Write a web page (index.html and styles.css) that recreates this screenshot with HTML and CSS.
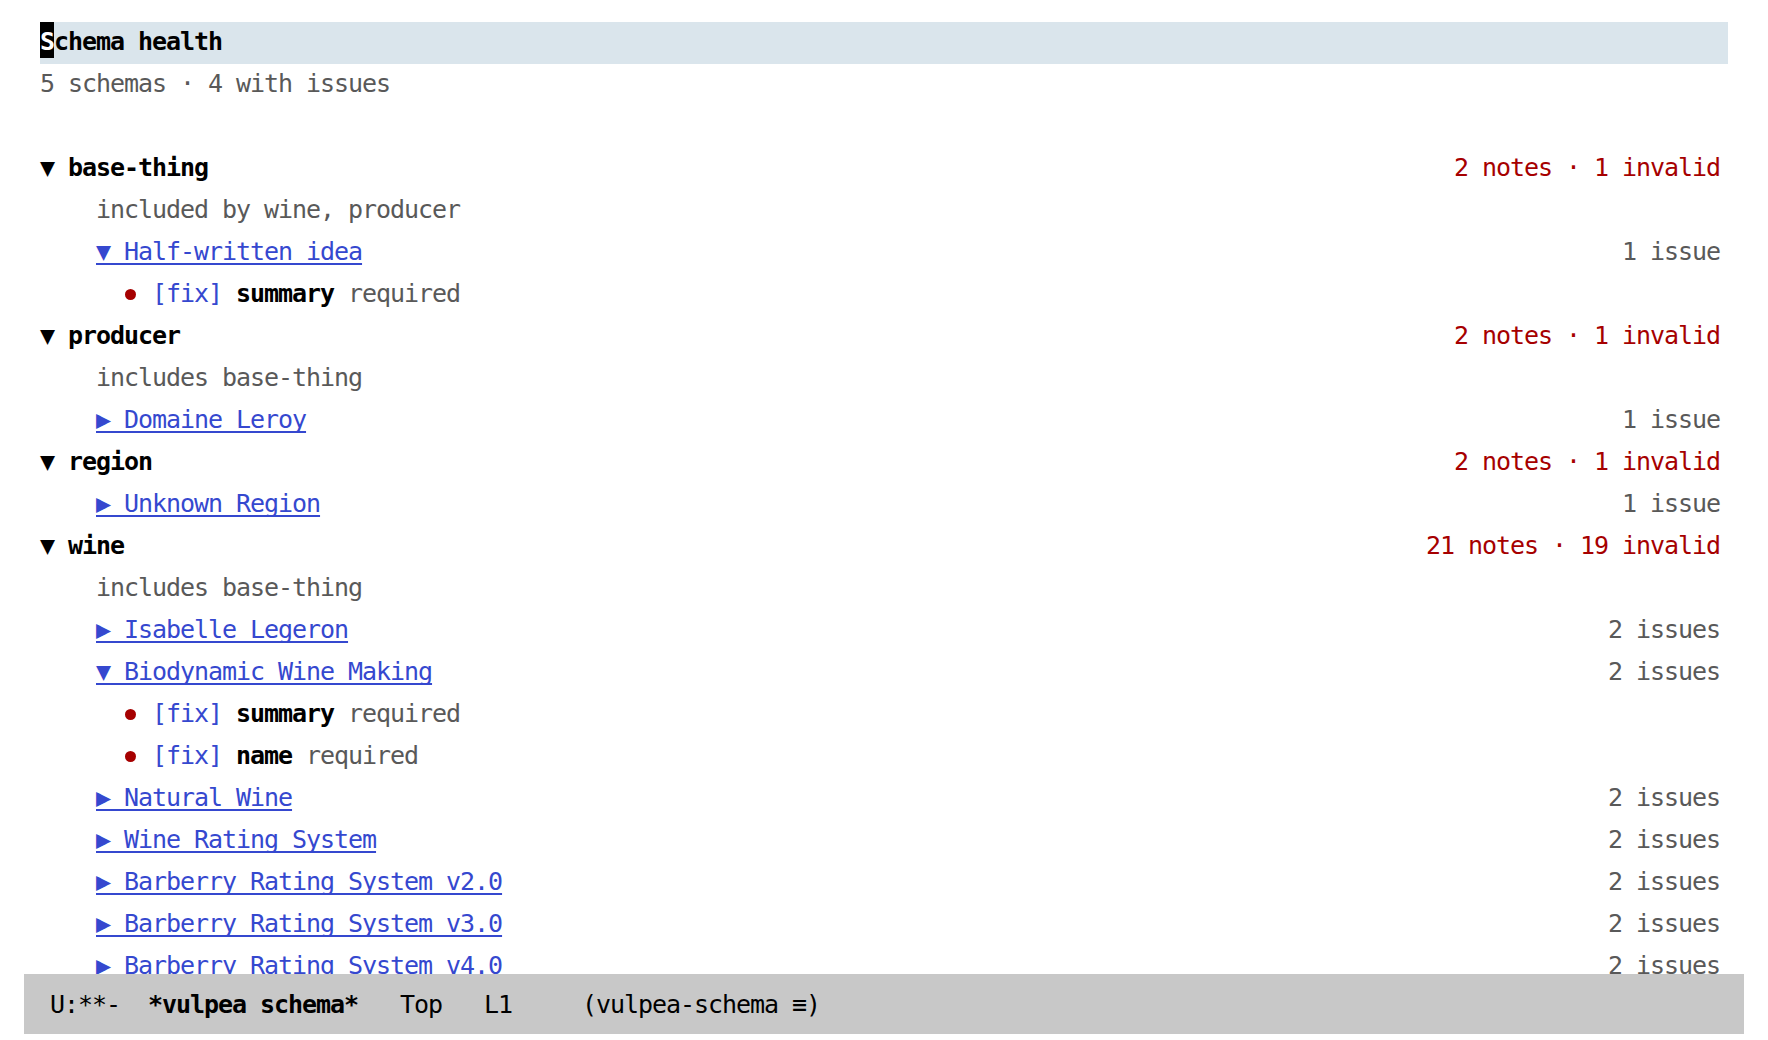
FILE: index.html
```html
<!DOCTYPE html>
<html lang="en">
<head>
    <meta charset="UTF-8">
    <title>*vulpea schema*</title>
    <link rel="stylesheet" href="styles.css">
</head>
<body>
    <div class="window">
        <div class="buffer">
            <div class="line current"><span class="title"><span class="cursor">S</span>chema health</span></div>
            <div class="line dim">5 schemas · 4 with issues</div>
            <div class="line"></div>

            <div class="line"><span class="schema"><span class="tri">▼</span> base-thing</span><span class="bad">2 notes · 1 invalid</span></div>
            <div class="line l1 dim">included by wine, producer</div>
            <div class="line l1"><a class="note"><span class="tri">▼</span> Half-written idea</a><span class="dim">1 issue</span></div>
            <div class="line l2"><span><span class="dot"></span> <span class="fix">[fix]</span> <b>summary</b> <span class="dim">required</span></span></div>

            <div class="line"><span class="schema"><span class="tri">▼</span> producer</span><span class="bad">2 notes · 1 invalid</span></div>
            <div class="line l1 dim">includes base-thing</div>
            <div class="line l1"><a class="note"><span class="tri">▶</span> Domaine Leroy</a><span class="dim">1 issue</span></div>

            <div class="line"><span class="schema"><span class="tri">▼</span> region</span><span class="bad">2 notes · 1 invalid</span></div>
            <div class="line l1"><a class="note"><span class="tri">▶</span> Unknown Region</a><span class="dim">1 issue</span></div>

            <div class="line"><span class="schema"><span class="tri">▼</span> wine</span><span class="bad">21 notes · 19 invalid</span></div>
            <div class="line l1 dim">includes base-thing</div>
            <div class="line l1"><a class="note"><span class="tri">▶</span> Isabelle Legeron</a><span class="dim">2 issues</span></div>
            <div class="line l1"><a class="note"><span class="tri">▼</span> Biodynamic Wine Making</a><span class="dim">2 issues</span></div>
            <div class="line l2"><span><span class="dot"></span> <span class="fix">[fix]</span> <b>summary</b> <span class="dim">required</span></span></div>
            <div class="line l2"><span><span class="dot"></span> <span class="fix">[fix]</span> <b>name</b> <span class="dim">required</span></span></div>
            <div class="line l1"><a class="note"><span class="tri">▶</span> Natural Wine</a><span class="dim">2 issues</span></div>
            <div class="line l1"><a class="note"><span class="tri">▶</span> Wine Rating System</a><span class="dim">2 issues</span></div>
            <div class="line l1"><a class="note"><span class="tri">▶</span> Barberry Rating System v2.0</a><span class="dim">2 issues</span></div>
            <div class="line l1"><a class="note"><span class="tri">▶</span> Barberry Rating System v3.0</a><span class="dim">2 issues</span></div>
            <div class="line l1"><a class="note"><span class="tri">▶</span> Barberry Rating System v4.0</a><span class="dim">2 issues</span></div>
        </div>
        <div class="modeline">U:**-  <b>*vulpea schema*</b>   Top   L1     (vulpea-schema ≡)</div>
    </div>
</body>
</html>
```

FILE: styles.css
```css
body {
    margin: 0;
    background: #ffffff;
    color: #000000;
    font-family: "DejaVu Sans Mono", "Liberation Mono", monospace;
    font-size: 25px;
    letter-spacing: -1.05px;
}
.window {
    margin: 22px 24px 0;
}
.buffer {
    height: 952px;
    overflow: hidden;
    padding: 0 16px;
}
.line {
    display: flex;
    justify-content: space-between;
    height: 42px;
    line-height: 39px;
    padding-right: 8px;
    white-space: pre;
}
.line.current {
    background: #dae5ec;
}
.l1 {
    padding-left: 56px;
}
.l2 {
    padding-left: 84px;
}
.title, .schema, b {
    font-weight: bold;
}
.cursor {
    background: #000000;
    color: #ffffff;
    padding: 5px 0 2px;
}
.dim {
    color: #595959;
}
.bad {
    color: #a60000;
}
.tri {
    font-weight: normal;
}
.note {
    color: #3548cf;
    text-decoration: underline;
    text-decoration-thickness: 2px;
    text-underline-offset: 3px;
    text-decoration-skip-ink: none;
}
.fix {
    color: #3548cf;
}
.dot {
    display: inline-block;
    width: 14px;
    height: 11px;
    vertical-align: 2px;
}
.dot::before {
    content: "";
    display: block;
    width: 11px;
    height: 11px;
    margin-left: 1px;
    border-radius: 50%;
    background: #a60000;
}
.modeline {
    display: flex;
    align-items: center;
    height: 60px;
    padding-left: 26px;
    background: #c8c8c8;
    white-space: pre;
}
```
